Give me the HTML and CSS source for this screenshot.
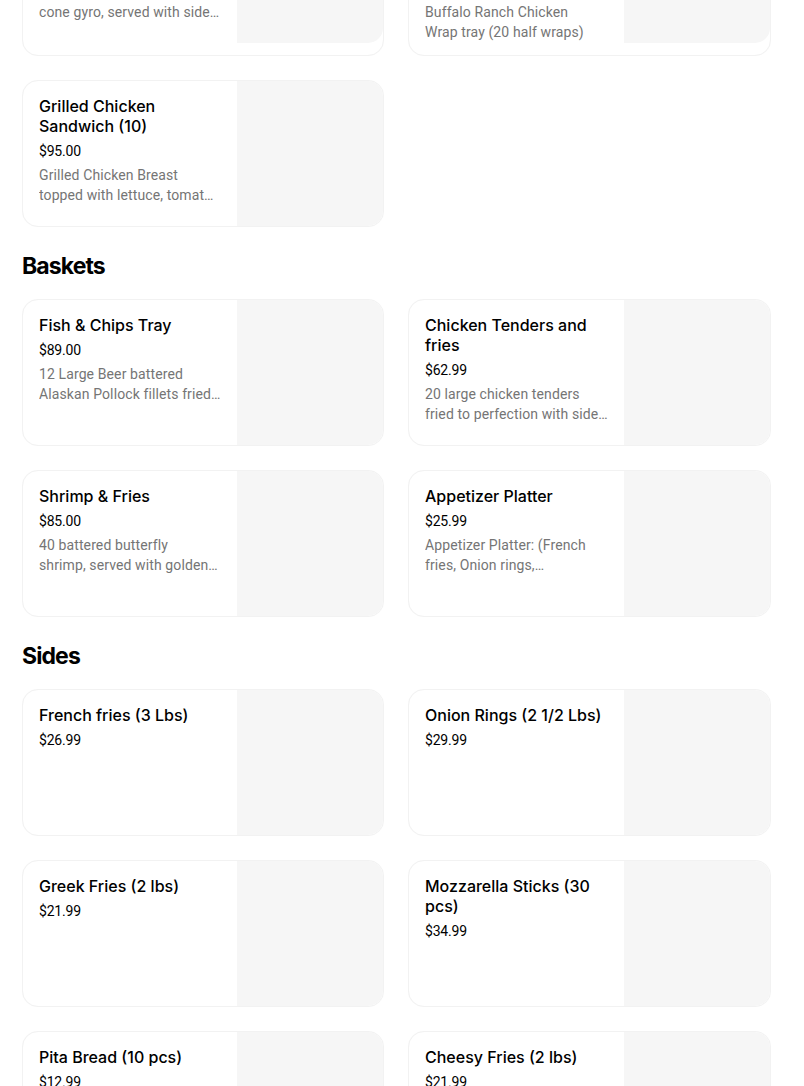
FILE: index.html
```html
<!DOCTYPE html>
<html lang="en">
<head>
<meta charset="utf-8">
<title>Menu</title>
<link rel="stylesheet" href="styles.css">
</head>
<body>
<main class="page">
  <section class="section">
    <div class="grid">
      <div class="card">
        <div class="info">
          <h3 class="title">Gyro Tray with Pita (serves 10)</h3>
          <div class="price">$99.00</div>
          <p class="desc">Thinly sliced lamb and beef cone gyro, served with side of rice and tzatziki sauce</p>
        </div>
        <div class="thumb"></div>
      </div>
      <div class="card">
        <div class="info">
          <h3 class="title">Buffalo Ranch Chicken Wrap Tray (20 half wraps)</h3>
          <div class="price">$95.00</div>
          <p class="desc">Buffalo Ranch Chicken Wrap&nbsp;tray (20 half wraps)</p>
        </div>
        <div class="thumb"></div>
      </div>
      <div class="card">
        <div class="info">
          <h3 class="title">Grilled Chicken Sandwich (10)</h3>
          <div class="price">$95.00</div>
          <p class="desc">Grilled Chicken Breast topped with lettuce, tomato, onions and garlic sauce</p>
        </div>
        <div class="thumb"></div>
      </div>
    </div>
  </section>

  <section class="section">
    <h2 class="heading">Baskets</h2>
    <div class="grid">
      <div class="card">
        <div class="info">
          <h3 class="title">Fish &amp; Chips Tray</h3>
          <div class="price">$89.00</div>
          <p class="desc">12 Large Beer battered Alaskan Pollock fillets fried to perfection with fries</p>
        </div>
        <div class="thumb"></div>
      </div>
      <div class="card">
        <div class="info">
          <h3 class="title">Chicken Tenders and fries</h3>
          <div class="price">$62.99</div>
          <p class="desc">20 large chicken tenders fried to perfection with side of fries</p>
        </div>
        <div class="thumb"></div>
      </div>
      <div class="card">
        <div class="info">
          <h3 class="title">Shrimp &amp; Fries</h3>
          <div class="price">$85.00</div>
          <p class="desc">40 battered butterfly shrimp,&nbsp;served with golden fries and cocktail sauce</p>
        </div>
        <div class="thumb"></div>
      </div>
      <div class="card">
        <div class="info">
          <h3 class="title">Appetizer Platter</h3>
          <div class="price">$25.99</div>
          <p class="desc">Appetizer Platter: (French fries, Onion rings, Mozzarella&nbsp;sticks)</p>
        </div>
        <div class="thumb"></div>
      </div>
    </div>
  </section>

  <section class="section">
    <h2 class="heading">Sides</h2>
    <div class="grid">
      <div class="card">
        <div class="info">
          <h3 class="title">French fries (3 Lbs)</h3>
          <div class="price">$26.99</div>
        </div>
        <div class="thumb"></div>
      </div>
      <div class="card">
        <div class="info">
          <h3 class="title">Onion Rings (2 1/2 Lbs)</h3>
          <div class="price">$29.99</div>
        </div>
        <div class="thumb"></div>
      </div>
      <div class="card">
        <div class="info">
          <h3 class="title">Greek Fries (2 lbs)</h3>
          <div class="price">$21.99</div>
        </div>
        <div class="thumb"></div>
      </div>
      <div class="card">
        <div class="info">
          <h3 class="title">Mozzarella Sticks (30 pcs)</h3>
          <div class="price">$34.99</div>
        </div>
        <div class="thumb"></div>
      </div>
      <div class="card">
        <div class="info">
          <h3 class="title">Pita Bread (10 pcs)</h3>
          <div class="price">$12.99</div>
        </div>
        <div class="thumb"></div>
      </div>
      <div class="card">
        <div class="info">
          <h3 class="title">Cheesy Fries (2 lbs)</h3>
          <div class="price">$21.99</div>
        </div>
        <div class="thumb"></div>
      </div>
    </div>
  </section>
</main>
</body>
</html>
```
FILE: styles.css
```css
* { box-sizing: border-box; }

html, body {
  margin: 0;
  padding: 0;
  background: #ffffff;
  overflow: hidden;
}

body {
  font-family: Roboto, "Liberation Sans", Arial, sans-serif;
  color: #000000;
}

.page {
  width: 749px;
  margin: -103px 0 0 22px;
  display: flex;
  flex-direction: column;
  gap: 23px;
}

.section {
  display: flex;
  flex-direction: column;
}

.heading {
  margin: 0 0 17px 0;
  font-family: Inter, Roboto, sans-serif;
  font-size: 23px;
  line-height: 32px;
  font-weight: 700;
  letter-spacing: -0.9px;
  color: #000;
}

.grid {
  display: grid;
  grid-template-columns: 362px 363px;
  column-gap: 24px;
  row-gap: 24px;
}

.card {
  display: flex;
  min-height: 147px;
  border: 1px solid #f2f2f2;
  border-radius: 16px;
  overflow: hidden;
  background: #fff;
  box-shadow: 0 0 1px rgba(0,0,0,0.03);
}

.info {
  flex: 1;
  min-width: 0;
  padding: 15px 16px 13px 16px;
}

.title {
  margin: 0;
  font-family: Inter, Roboto, sans-serif;
  font-size: 16px;
  line-height: 20px;
  font-weight: 500;
  color: #000;
}

.price {
  margin-top: 5px;
  font-size: 14px;
  line-height: 20px;
  color: #000;
  letter-spacing: -0.2px;
}

.desc {
  margin: 4px 0 0 0;
  font-size: 14px;
  line-height: 20px;
  letter-spacing: 0.11px;
  color: #757575;
  display: -webkit-box;
  -webkit-line-clamp: 2;
  -webkit-box-orient: vertical;
  overflow: hidden;
}

.thumb {
  flex: 0 0 146px;
  height: 145px;
  background: #f6f6f6;
  border-radius: 0 15px 15px 0;
}
```
